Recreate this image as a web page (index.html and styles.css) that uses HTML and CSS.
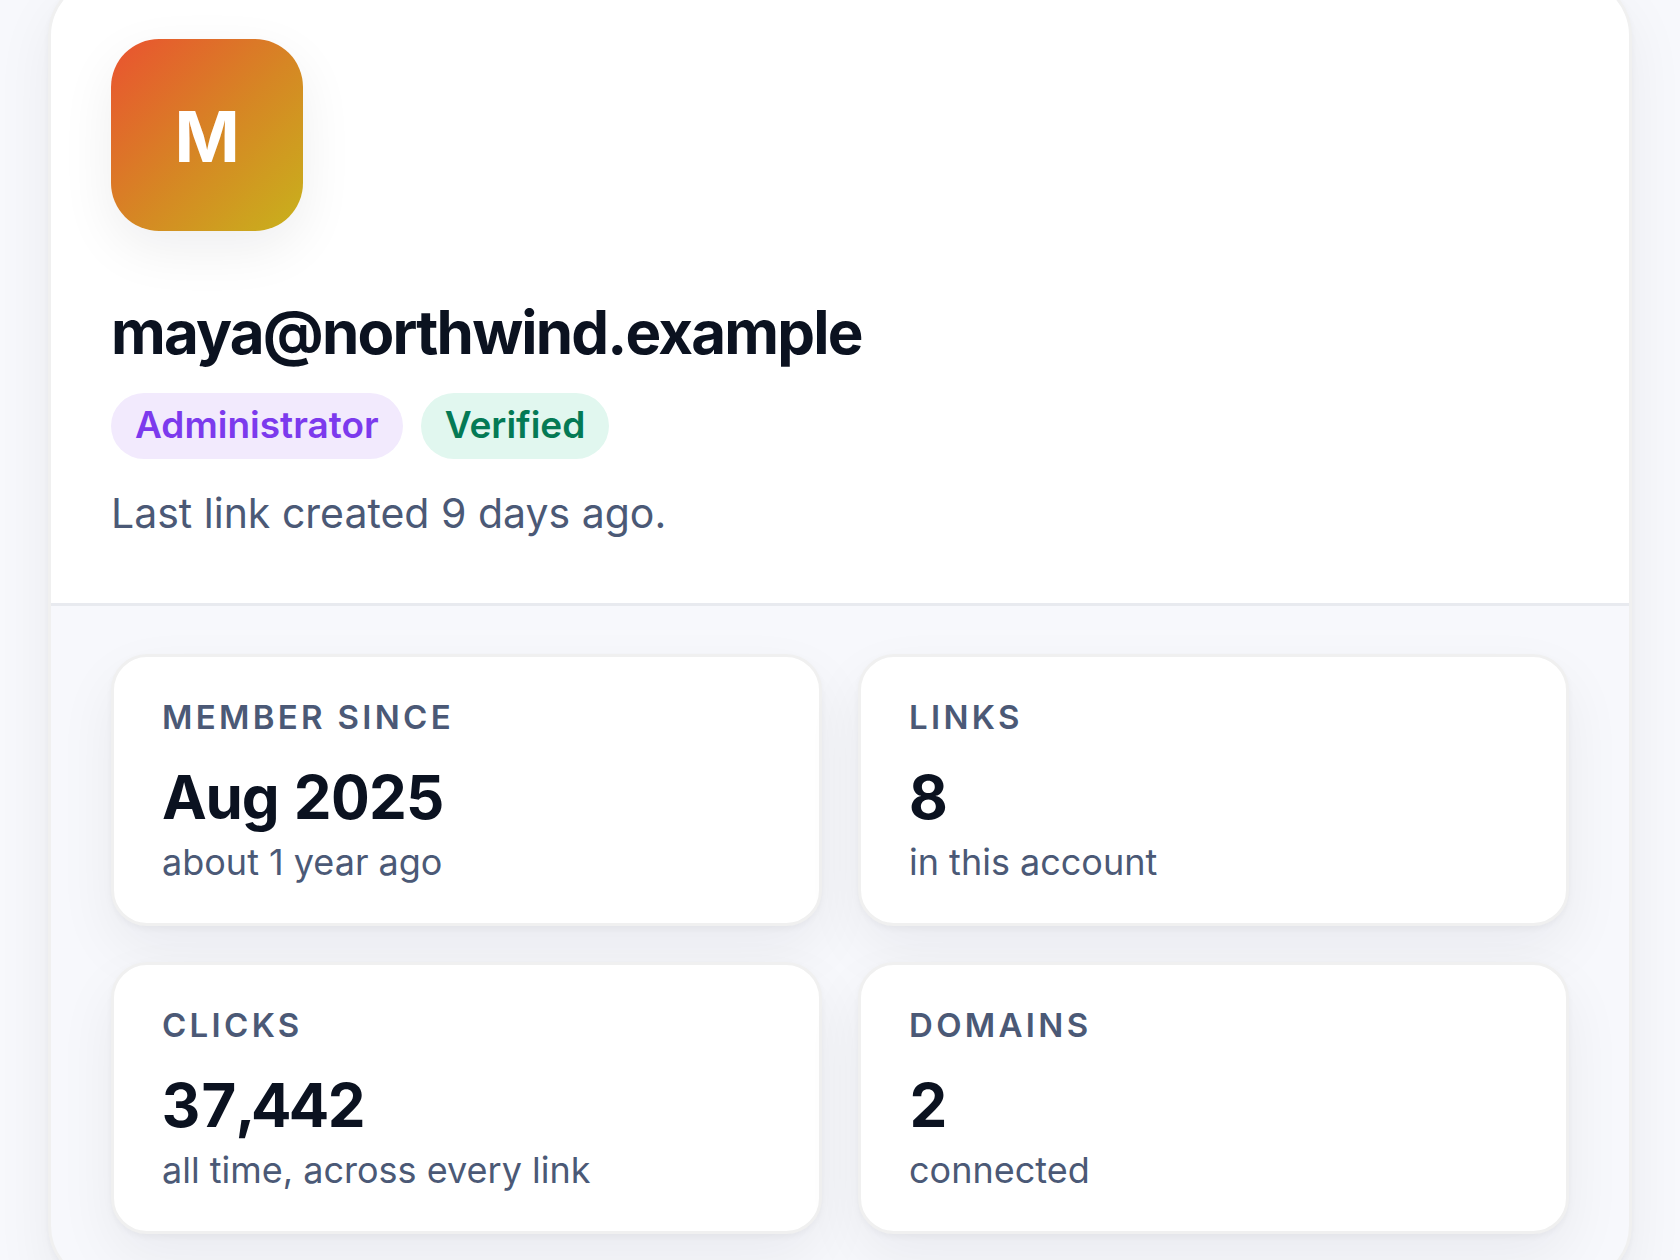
FILE: index.html
```html
<!DOCTYPE html>
<html lang="en">
<head>
<meta charset="utf-8">
<meta name="viewport" content="width=device-width, initial-scale=1">
<title>Account profile</title>
<link rel="stylesheet" href="styles.css">
</head>
<body>
<main class="page">
  <article class="profile">
    <header class="profile-head">
      <div class="avatar" aria-hidden="true">M</div>
      <h1 class="email">maya@northwind.example</h1>
      <div class="badges">
        <span class="badge badge-role">Administrator</span>
        <span class="badge badge-verified">Verified</span>
      </div>
      <p class="activity">Last link created 9 days ago.</p>
    </header>
    <section class="stats" aria-label="Account statistics">
      <div class="stat">
        <h2 class="stat-label">Member since</h2>
        <p class="stat-value">Aug 2025</p>
        <p class="stat-note">about 1 year ago</p>
      </div>
      <div class="stat">
        <h2 class="stat-label">Links</h2>
        <p class="stat-value">8</p>
        <p class="stat-note">in this account</p>
      </div>
      <div class="stat">
        <h2 class="stat-label">Clicks</h2>
        <p class="stat-value">37,442</p>
        <p class="stat-note">all time, across every link</p>
      </div>
      <div class="stat">
        <h2 class="stat-label">Domains</h2>
        <p class="stat-value">2</p>
        <p class="stat-note">connected</p>
      </div>
    </section>
  </article>
</main>
</body>
</html>
```
FILE: styles.css
```css
:root {
  --ink: #0b1220;
  --muted: #4b5976;
  --surface: #ffffff;
  --canvas: #f7f8fc;
  --edge: #f0f0f0;
  --shadow: 0 3px 6px rgba(11, 18, 32, 0.04), 0 24px 60px rgba(11, 18, 32, 0.06);
}

* {
  box-sizing: border-box;
}

body {
  margin: 0;
  height: 100vh;
  overflow: hidden;
  background: var(--canvas);
  color: var(--ink);
  font-family: Inter, "Liberation Sans", sans-serif;
}

h1,
h2,
p {
  margin: 0;
}

.page {
  padding: 0 48px;
}

.profile {
  margin-top: -24px;
  border: 3px solid var(--edge);
  border-radius: 60px;
  background: var(--canvas);
  box-shadow: var(--shadow);
}

.profile-head {
  padding: 60px;
  border-bottom: 3px solid #e8eaef;
  border-radius: 57px 57px 0 0;
  background: var(--surface);
}

.avatar {
  display: grid;
  place-items: center;
  width: 192px;
  height: 192px;
  padding-top: 4px;
  border-radius: 48px;
  background: linear-gradient(135deg, #ea5230, #d68624 52%, #c8b21c);
  box-shadow: 0 18px 54px rgba(11, 18, 32, 0.07);
  color: #ffffff;
  font-size: 70px;
  font-weight: 700;
  line-height: 84px;
}

.email {
  margin-top: 65px;
  font-size: 60px;
  font-weight: 700;
  line-height: 72px;
  letter-spacing: -0.03em;
}

.badges {
  display: flex;
  flex-wrap: wrap;
  gap: 18px;
  margin-top: 25px;
}

.badge {
  padding: 8px 24px 10px;
  border-radius: 33px;
  font-size: 37px;
  font-weight: 600;
  line-height: 48px;
}

.badge-role {
  background: #f2eafd;
  color: #7c3aed;
}

.badge-verified {
  background: #e1f7ef;
  color: #047a55;
}

.activity {
  margin-top: 24px;
  color: var(--muted);
  font-size: 41px;
  line-height: 60px;
}

.stats {
  display: grid;
  grid-template-columns: 1fr 1fr;
  gap: 36px;
  padding: 48px 60px;
}

.stat {
  padding: 36px 48px;
  border: 3px solid var(--edge);
  border-radius: 36px;
  background: var(--surface);
  box-shadow: var(--shadow);
}

.stat-label {
  color: var(--muted);
  font-size: 33px;
  font-weight: 600;
  line-height: 48px;
  letter-spacing: 0.1em;
  text-transform: uppercase;
}

.stat-value {
  margin-top: 16px;
  font-size: 60px;
  font-variant-numeric: tabular-nums;
  font-weight: 700;
  line-height: 80px;
  letter-spacing: -0.02em;
}

.stat-note {
  color: var(--muted);
  font-size: 36px;
  line-height: 50px;
}
```
